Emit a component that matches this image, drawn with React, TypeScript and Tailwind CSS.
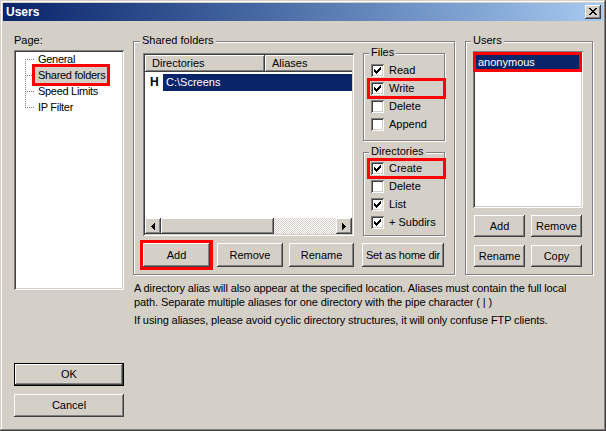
import React from "react";

const RAISED =
  "bg-[#d4d0c8] shadow-[inset_-1px_-1px_#404040,inset_1px_1px_#ffffff,inset_-2px_-2px_#808080,inset_2px_2px_#d4d0c8]";
const SUNKEN =
  "shadow-[inset_1px_1px_#808080,inset_-1px_-1px_#ffffff,inset_2px_2px_#404040,inset_-2px_-2px_#d4d0c8]";
const DEFAULT_BTN =
  "bg-[#d4d0c8] shadow-[inset_-1px_-1px_#000000,inset_1px_1px_#000000,inset_-2px_-2px_#404040,inset_2px_2px_#ffffff,inset_-3px_-3px_#808080,inset_3px_3px_#d4d0c8]";
const ETCHED = "border border-[#808080] shadow-[inset_1px_1px_#ffffff,1px_1px_#ffffff]";
const RED = "outline-[3px] outline-solid outline-[#ff0000]";

function Btn({ children, className = "" }: { children: React.ReactNode; className?: string }) {
  return (
    <div className={`${RAISED} flex shrink-0 items-center justify-center leading-[13px] ${className}`}>
      {children}
    </div>
  );
}

const CHECK_STARTS = [2, 3, 4, 3, 2, 1, 0];

function Check({ checked }: { checked: boolean }) {
  return (
    <div className={`relative h-[13px] w-[13px] shrink-0 bg-white ${SUNKEN}`}>
      {checked && (
        <svg className="absolute left-0 top-0" width="13" height="13" shapeRendering="crispEdges">
          {CHECK_STARTS.map((s, c) => (
            <rect key={c} x={3 + c} y={3 + s} width="1" height="3" fill="#000" />
          ))}
        </svg>
      )}
    </div>
  );
}

function CheckRow({ label, checked, red = false }: { label: string; checked: boolean; red?: boolean }) {
  return (
    <div className={`flex h-[15px] w-[73px] items-center pl-[1px] ${red ? RED : ""}`}>
      <Check checked={checked} />
      <span className="ml-[5px] leading-[13px]">{label}</span>
    </div>
  );
}

function Group({
  label,
  labelLeft,
  className,
  children,
}: {
  label: string;
  labelLeft: string;
  className: string;
  children: React.ReactNode;
}) {
  return (
    <div className={`relative shrink-0 ${ETCHED} ${className}`}>
      <div className={`absolute -top-[8px] ${labelLeft} bg-[#d4d0c8] px-[2px] leading-[13px]`}>{label}</div>
      {children}
    </div>
  );
}

const X_PATTERN = ["11....11", ".11..11.", "..1111..", "...11...", "..1111..", ".11..11.", "11....11"];

function CloseGlyph() {
  return (
    <svg width="8" height="7" shapeRendering="crispEdges">
      {X_PATTERN.flatMap((row, y) =>
        row.split("").map((ch, x) => (ch === "1" ? <rect key={`${x}-${y}`} x={x} y={y} width="1" height="1" fill="#000" /> : null))
      )}
    </svg>
  );
}

function Arrow({ dir }: { dir: "left" | "right" }) {
  const cols = [3, 2, 1, 0];
  return (
    <svg width="4" height="7" shapeRendering="crispEdges">
      {cols.map((half, i) => {
        const x = dir === "left" ? i : 3 - i;
        const h = 1 + (3 - half) * 2;
        return <rect key={i} x={x} y={half} width="1" height={h} fill="#000" />;
      })}
    </svg>
  );
}

function TreeRow({ label, index, count, selected }: { label: string; index: number; count: number; selected?: boolean }) {
  const y1 = index === 0 ? 8 : 0;
  const y2 = index === count - 1 ? 8 : 16;
  return (
    <div className="flex h-[16px] items-center">
      <svg width="10" height="16" className="shrink-0" shapeRendering="crispEdges">
        {Array.from({ length: 16 }).map((_, y) =>
          y >= y1 && y <= y2 && y % 2 === 0 ? <rect key={`v${y}`} x="0" y={y} width="1" height="1" fill="#808080" /> : null
        )}
        {Array.from({ length: 5 }).map((_, i) => (
          <rect key={`h${i}`} x={2 + i * 2} y="8" width="1" height="1" fill="#808080" />
        ))}
      </svg>
      <div
        className={`h-[16px] pl-[3px] pr-[2px] leading-[16px] tracking-[-0.3px] whitespace-nowrap ${selected ? `bg-[#d4d0c8] ${RED}` : ""}`}
      >
        {label}
      </div>
    </div>
  );
}

export default function App() {
  const tree = ["General", "Shared folders", "Speed Limits", "IP Filter"];
  return (
    <div className="h-[431px] w-[606px] overflow-hidden bg-[#d4d0c8] font-['Liberation_Sans',Arial,sans-serif] text-[11px] text-black">
      <div className="flex h-[431px] w-[606px] flex-col p-[3px] shadow-[inset_-1px_-1px_#404040,inset_1px_1px_#d4d0c8,inset_-2px_-2px_#808080,inset_2px_2px_#ffffff]">
        {/* Title bar */}
        <div className="flex h-[18px] shrink-0 items-center justify-between bg-linear-to-r from-[#0a246a] to-[#a6caf0] pl-[3px] pr-[2px]">
          <span className="text-[12px] font-bold leading-[18px] text-white">Users</span>
          <div className={`${RAISED} flex h-[14px] w-[16px] items-center justify-center pb-[1px]`}>
            <CloseGlyph />
          </div>
        </div>

        {/* Body */}
        <div className="flex flex-1 pl-[11px]">
          {/* Left column */}
          <div className="flex w-[110px] shrink-0 flex-col">
            <div className="mt-[13px] h-[13px] leading-[13px]">Page:</div>
            <div className={`mt-[3px] h-[240px] bg-white pl-[11px] pt-[1px] ${SUNKEN}`}>
              {tree.map((t, i) => (
                <TreeRow key={t} label={t} index={i} count={tree.length} selected={i === 1} />
              ))}
            </div>
            <div className={`${DEFAULT_BTN} mt-[73px] flex h-[23px] items-center justify-center`}>OK</div>
            <Btn className="mt-[8px] h-[23px]">Cancel</Btn>
          </div>

          {/* Right area */}
          <div className="ml-[9px] flex flex-col">
            <div className="mt-[20px] flex">
              {/* Shared folders */}
              <Group label="Shared folders" labelLeft="left-[6px]" className="h-[234px] w-[322px]">
                <div className="pl-[9px] pt-[11px]">
                  <div className="flex">
                    {/* List view */}
                    <div className={`flex h-[183px] w-[211px] shrink-0 flex-col bg-white p-[2px] ${SUNKEN}`}>
                      <div className="flex h-[17px] shrink-0 overflow-hidden">
                        <div className={`${RAISED} w-[120px] shrink-0 pl-[7px] leading-[17px]`}>Directories</div>
                        <div className={`${RAISED} w-[100px] shrink-0 pl-[7px] leading-[17px]`}>Aliases</div>
                      </div>
                      <div className="mt-[2px] flex h-[17px] shrink-0">
                        <div className="w-[18px] shrink-0 pl-[5px] text-[12px] font-bold leading-[17px]">H</div>
                        <div className="flex-1 bg-[#0a246a] pl-[3px] leading-[17px] text-white">C:\Screens</div>
                      </div>
                      <div className="mt-auto flex h-[16px] shrink-0">
                        <div className={`${RAISED} flex w-[16px] shrink-0 items-center justify-center pr-[1px]`}>
                          <Arrow dir="left" />
                        </div>
                        <div className={`${RAISED} w-[113px] shrink-0`} />
                        <div className="flex-1 bg-[image:repeating-conic-gradient(#ffffff_0_25%,#d4d0c8_0_50%)] bg-[length:2px_2px]" />
                        <div className={`${RAISED} flex w-[16px] shrink-0 items-center justify-center`}>
                          <Arrow dir="right" />
                        </div>
                      </div>
                    </div>

                    {/* Permissions */}
                    <div className="ml-[9px] flex w-[82px] flex-col">
                      <Group label="Files" labelLeft="left-[5px]" className="h-[88px] w-[82px]">
                        <div className="flex flex-col gap-[3px] pl-[6px] pt-[9px]">
                          <CheckRow label="Read" checked />
                          <CheckRow label="Write" checked red />
                          <CheckRow label="Delete" checked={false} />
                          <CheckRow label="Append" checked={false} />
                        </div>
                      </Group>
                      <Group label="Directories" labelLeft="left-[5px]" className="mt-[11px] h-[84px] w-[82px]">
                        <div className="flex flex-col gap-[3px] pl-[6px] pt-[8px]">
                          <CheckRow label="Create" checked red />
                          <CheckRow label="Delete" checked={false} />
                          <CheckRow label="List" checked />
                          <CheckRow label="+ Subdirs" checked />
                        </div>
                      </Group>
                    </div>
                  </div>

                  <div className="mt-[7px] flex h-[24px]">
                    <Btn className={`h-[24px] w-[67px] ${RED}`}>Add</Btn>
                    <Btn className="ml-[7px] h-[24px] w-[66px]">Remove</Btn>
                    <Btn className="ml-[6px] h-[24px] w-[65px]">Rename</Btn>
                    <Btn className="ml-[8px] h-[24px] w-[82px] whitespace-nowrap tracking-[-0.2px]">Set as home dir</Btn>
                  </div>
                </div>
              </Group>

              {/* Users */}
              <Group label="Users" labelLeft="left-[5px]" className="ml-[10px] h-[234px] w-[128px]">
                <div className="pl-[7px] pt-[9px]">
                  <div className={`h-[157px] w-[110px] bg-white p-[2px] ${SUNKEN}`}>
                    <div className={`ml-[1px] mt-[2px] h-[14px] w-[103px] bg-[#0a246a] pl-[2px] leading-[14px] text-white ${RED}`}>
                      anonymous
                    </div>
                  </div>
                  <div className="mt-[7px] flex">
                    <Btn className="ml-[1px] h-[22px] w-[51px]">Add</Btn>
                    <Btn className="ml-[6px] h-[22px] w-[51px]">Remove</Btn>
                  </div>
                  <div className="mt-[8px] flex">
                    <Btn className="ml-[1px] h-[22px] w-[51px]">Rename</Btn>
                    <Btn className="ml-[6px] h-[22px] w-[51px]">Copy</Btn>
                  </div>
                </div>
              </Group>
            </div>

            {/* Description */}
            <div className="ml-[1px] mt-[6px] leading-[14px] tracking-[-0.1px] whitespace-nowrap">
              <div>A directory alias will also appear at the specified location. Aliases must contain the full local</div>
              <div>path. Separate multiple aliases for one directory with the pipe character ( | )</div>
              <div className="mt-[4px]">
                If using aliases, please avoid cyclic directory structures, it will only confuse FTP clients.
              </div>
            </div>
          </div>
        </div>
      </div>
    </div>
  );
}
